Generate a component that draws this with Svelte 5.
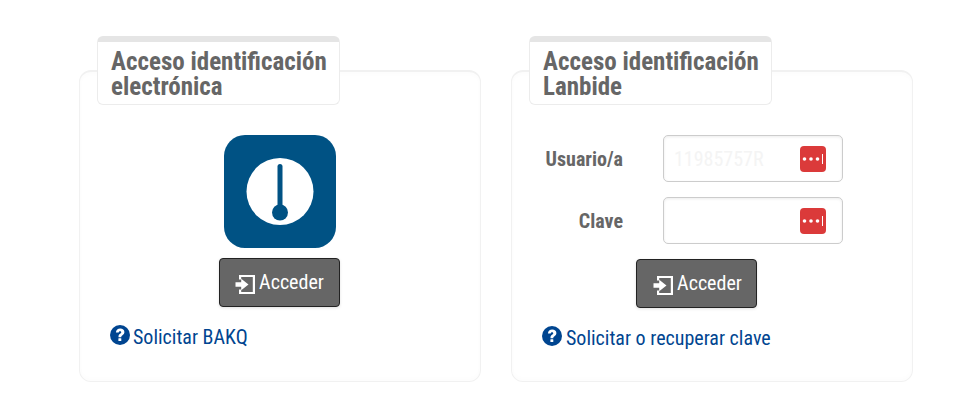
<script>
  const pw = ['11985757R', ''];
</script>

{#snippet enter()}
  <svg class="enter" viewBox="0 0 20 20" width="20" height="20" aria-hidden="true">
    <path d="M4 1h16v19H4v-4.500h2.200v2.400h11.600V3.100H6.200v2.400H4z" fill="#fff"/>
    <path d="M0.500 8.300h5.700V4.800l7.300 5.700-7.300 5.700v-3.500H0.500z" fill="#fff"/>
  </svg>
{/snippet}

{#snippet help()}
  <svg class="help" viewBox="0 0 20 20" width="20" height="20" aria-hidden="true">
    <circle cx="10" cy="10" r="10" fill="#004590"/>
    <path d="M5.900 7.600C6.100 5 7.800 3.600 10.200 3.600c2.500 0 4.200 1.400 4.200 3.500 0 1.600-.8 2.400-1.900 3.100-.9.600-1.200.9-1.200 1.700v.4H8.500v-.7c0-1.400.5-2.100 1.600-2.800.8-.5 1.200-.9 1.200-1.500 0-.7-.5-1.100-1.200-1.100-.8 0-1.300.5-1.400 1.400z" fill="#fff"/>
    <rect x="8.400" y="13.200" width="2.900" height="2.900" rx=".4" fill="#fff"/>
  </svg>
{/snippet}

{#snippet dots()}
  <span class="dots">
    <svg viewBox="0 0 26 26" width="26" height="26" aria-hidden="true">
      <rect width="26" height="26" rx="4" fill="#db3a3a"/>
      <circle cx="4.500" cy="13" r="1.800" fill="#fff"/>
      <circle cx="11" cy="13" r="1.800" fill="#fff"/>
      <circle cx="17.500" cy="13" r="1.800" fill="#fff"/>
      <rect x="22" y="8" width="1" height="10" fill="#fff"/>
    </svg>
  </span>
{/snippet}

<main class="page">
  <section class="panel">
    <h2 class="title">Acceso identificación electrónica</h2>
    <div class="body">
      <div class="logo">
        <svg viewBox="0 0 112 113" width="112" height="113" aria-label="BAKQ">
          <rect width="112" height="113" rx="21" fill="#005284"/>
          <circle cx="56" cy="56.500" r="33.500" fill="#fff"/>
          <rect x="53.500" y="29" width="5" height="48" rx="2.500" fill="#005284"/>
          <circle cx="56" cy="77.500" r="8" fill="#005284"/>
        </svg>
      </div>
      <button class="btn first">{@render enter()}<span>Acceder</span></button>
      <a class="link bakq" href="#a">{@render help()}<span>Solicitar BAKQ</span></a>
    </div>
  </section>

  <section class="panel">
    <h2 class="title">Acceso identificación Lanbide</h2>
    <div class="body">
      <form class="form">
        <div class="row">
          <span class="label">Usuario/a</span>
          <span class="input"><span class="value">{pw[0]}</span>{@render dots()}</span>
        </div>
        <div class="row">
          <span class="label">Clave</span>
          <span class="input"><span class="value">{pw[1]}</span>{@render dots()}</span>
        </div>
      </form>
      <button class="btn second">{@render enter()}<span>Acceder</span></button>
      <a class="link recover" href="#a">{@render help()}<span>Solicitar o recuperar clave</span></a>
    </div>
  </section>
</main>

<style>
  :global(body) {
    margin: 0;
    background: #fff;
  }
  .page {
    display: flex;
    gap: 30px;
    padding: 36px 0 0 79px;
    height: 365px;
    font-family: "Roboto Condensed", Roboto, "Liberation Sans Narrow", sans-serif;
    font-stretch: 75%;
  }
  .panel {
    box-sizing: border-box;
    width: 402px;
    height: 312px;
    margin-top: 34px;
    border: 1px solid #f1f1f1;
    border-top-width: 2px;
    border-radius: 12px;
    box-shadow: inset 0 2px 4px rgba(0, 0, 0, 0.015), inset 0 -3px 4px rgba(0, 0, 0, 0.012);
    background: #fff;
  }
  .title {
    box-sizing: border-box;
    width: 243px;
    height: 69px;
    margin: -36px 0 0 17px;
    padding: 7px 0 0 13px;
    border: 1px solid #ececec;
    border-top: 6px solid #e5e5e5;
    border-radius: 6px;
    background: #fff;
    color: #666;
    font-size: 25px;
    font-weight: 700;
    line-height: 25px;
  }
  .body {
    display: flex;
    flex-direction: column;
  }
  .logo {
    display: flex;
    justify-content: center;
    margin-top: 30px;
  }
  .btn {
    box-sizing: border-box;
    display: flex;
    align-items: center;
    justify-content: center;
    gap: 4px;
    width: 121px;
    height: 49px;
    padding: 0 0 1px;
    border: 1px solid #222;
    border-radius: 4px;
    background: #666;
    box-shadow: 0 1px 3px rgba(0, 0, 0, 0.12);
    color: #fff;
    font: inherit;
    font-size: 20px;
  }
  .enter {
    margin-top: 4px;
  }
  .btn.first {
    margin: 10px 0 0 139px;
  }
  .btn.second {
    margin: 15px 0 0 124px;
    padding-left: 2px;
  }
  .link {
    display: flex;
    align-items: center;
    gap: 4px;
    color: #004590;
    font-size: 20px;
    line-height: 24px;
    text-decoration: none;
  }
  .link.bakq {
    gap: 3px;
    margin: 18px 0 0 30px;
  }
  .link.recover {
    margin: 18px 0 0 30px;
  }
  .help {
    margin-top: -5px;
  }
  .form {
    display: flex;
    flex-direction: column;
    gap: 15px;
    margin-top: 30px;
  }
  .row {
    display: flex;
    align-items: center;
    height: 47px;
  }
  .label {
    width: 111px;
    margin-right: 40px;
    color: #666;
    font-size: 20px;
    font-weight: 700;
    text-align: right;
  }
  .input {
    box-sizing: border-box;
    display: flex;
    align-items: center;
    justify-content: space-between;
    width: 180px;
    height: 47px;
    padding: 0 16px 0 10px;
    border: 1px solid #ccc;
    border-radius: 5px;
    box-shadow: inset 0 1px 3px rgba(0, 0, 0, 0.08);
    color: #f4f4f4;
    font-size: 20px;
  }
  .dots {
    display: flex;
  }
</style>
